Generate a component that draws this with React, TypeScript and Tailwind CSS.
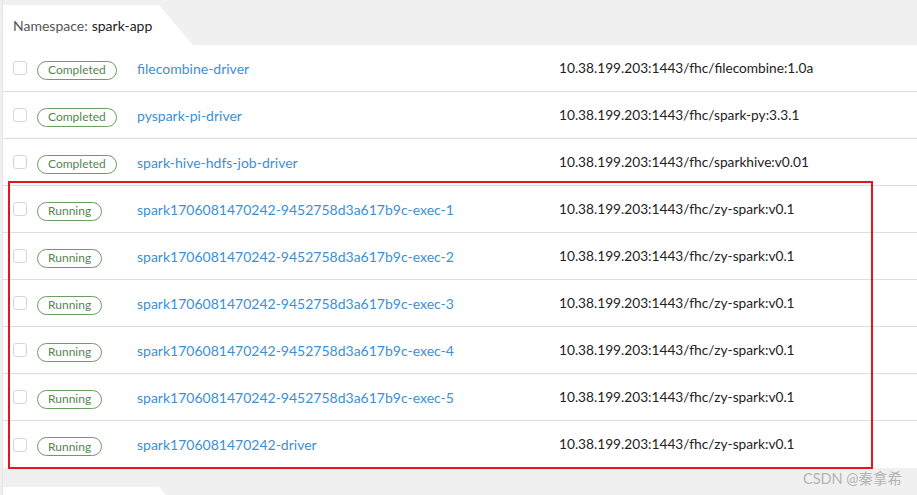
const ROWS = [
  { status: "Completed", name: "filecombine-driver", image: "10.38.199.203:1443/fhc/filecombine:1.0a" },
  { status: "Completed", name: "pyspark-pi-driver", image: "10.38.199.203:1443/fhc/spark-py:3.3.1" },
  { status: "Completed", name: "spark-hive-hdfs-job-driver", image: "10.38.199.203:1443/fhc/sparkhive:v0.01" },
  { status: "Running", name: "spark1706081470242-9452758d3a617b9c-exec-1", image: "10.38.199.203:1443/fhc/zy-spark:v0.1" },
  { status: "Running", name: "spark1706081470242-9452758d3a617b9c-exec-2", image: "10.38.199.203:1443/fhc/zy-spark:v0.1" },
  { status: "Running", name: "spark1706081470242-9452758d3a617b9c-exec-3", image: "10.38.199.203:1443/fhc/zy-spark:v0.1" },
  { status: "Running", name: "spark1706081470242-9452758d3a617b9c-exec-4", image: "10.38.199.203:1443/fhc/zy-spark:v0.1" },
  { status: "Running", name: "spark1706081470242-9452758d3a617b9c-exec-5", image: "10.38.199.203:1443/fhc/zy-spark:v0.1" },
  { status: "Running", name: "spark1706081470242-driver", image: "10.38.199.203:1443/fhc/zy-spark:v0.1" },
];

function Tab({ label }: { label?: boolean }) {
  return (
    <div className="flex h-[40px] w-[190px]">
      <div className="flex flex-1 items-center bg-white pl-[10px] text-[14px]">
        {label ? (
          <>
            <span className="text-[#555]">Namespace:</span>
            <span className="ml-[4px] text-[#222]">spark-app</span>
          </>
        ) : null}
      </div>
      <svg width="34" height="40" viewBox="0 0 34 40" className="block">
        <polygon points="0,0 0,40 34,40" fill="#ffffff" />
      </svg>
    </div>
  );
}

export default function App() {
  return (
    <div
      className="relative h-[495px] w-[917px] overflow-hidden bg-[#f0f0f0]"
      style={{ fontFamily: "Lato, 'Noto Sans CJK SC', sans-serif" }}
    >
      <div className="ml-[2px] border-l border-[#e4e4e4] pt-[5px]">
        <Tab label />
        <div className="bg-white">
          {ROWS.map((r) => (
            <div key={r.name} className="flex h-[47px] items-center border-b border-[#dcdce6] last:border-b-0">
              <div className="ml-[10px] h-[14px] w-[14px] rounded-[3px] border border-[#d4d4de] bg-white" />
              <div className="ml-[10px] w-[100px]">
                <span className="inline-flex h-[19px] items-center rounded-full border border-[#6a9e62] px-[10px] text-[12px] text-[#55844f]">
                  {r.status}
                </span>
              </div>
              <div className="w-[422px] text-[14px] text-[#3d8fd4]">{r.name}</div>
              <div className="text-[13.7px] text-[#222]">{r.image}</div>
            </div>
          ))}
        </div>
        <div className="mt-[19px]">
          <Tab />
        </div>
      </div>
      <div className="absolute left-[8px] top-[181px] h-[288px] w-[865px] border-2 border-[#e5141e]" />
      <div className="absolute left-[803px] top-[468px] text-[14.5px] text-[#b4b4b4]">CSDN @秦拿希</div>
    </div>
  );
}
